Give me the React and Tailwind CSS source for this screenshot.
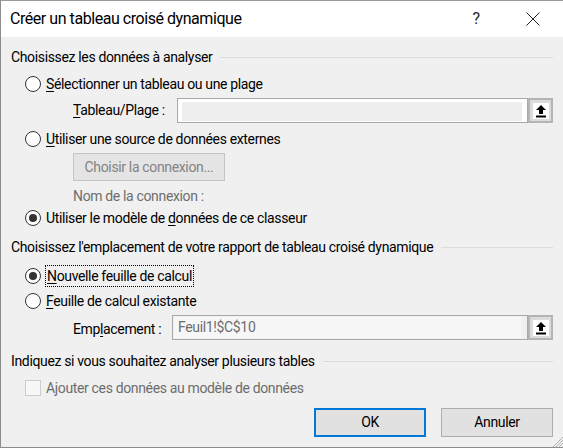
import React from "react";

const font = { fontFamily: 'Roboto, "Noto Sans", sans-serif' };

const Radio = ({ checked }) => (
  <span className="w-4 h-4 rounded-full border border-[#333] bg-white flex items-center justify-center shrink-0">
    {checked && <span className="w-2 h-2 rounded-full bg-[#333]" />}
  </span>
);

const U = ({ children }) => <span className="underline underline-offset-2">{children}</span>;

const PickButton = () => (
  <div className="w-[25px] h-[25px] border-2 border-[#b4b4b4] bg-[#dcdcdc] flex items-center justify-center shrink-0">
    <div className="w-[16px] h-[16px] bg-white flex items-center justify-center">
      <svg width="12" height="14" viewBox="0 0 12 14">
        <path d="M6 1 L11 6 L8 6 L8 10 L4 10 L4 6 L1 6 Z" fill="#000" />
        <rect x="1" y="11.5" width="10" height="2" fill="#000" />
      </svg>
    </div>
  </div>
);

const GroupLabel = ({ children, className }) => (
  <div className={"h-[22px] flex items-center gap-2 pr-[10px] " + className}>
    <span className="whitespace-nowrap">{children}</span>
    <div className="flex-1 h-px bg-[#dcdcdc]" />
  </div>
);

export default function App() {
  return (
    <div
      className="w-[563px] h-[448px] bg-[#f0f0f0] text-[14px] tracking-[-0.35px] text-black border-l border-b border-[#8c8c8c] flex flex-col relative overflow-hidden"
      style={font}
    >
      {/* Title bar */}
      <div className="h-[37px] bg-white flex items-center pl-[9px] shrink-0 border-t border-[#9a9a9a]">
        <span className="text-[16px] tracking-[-0.45px] flex-1">Créer un tableau croisé dynamique</span>
        <span className="w-[20px] text-center text-[16px] mr-[40px] text-[#222]">?</span>
        <svg width="14" height="14" viewBox="0 0 14 14" className="mr-[23px]">
          <path d="M0.5 0.5 L13.5 13.5 M13.5 0.5 L0.5 13.5" stroke="#222" strokeWidth="1" />
        </svg>
      </div>

      <div className="pl-[10px] flex flex-col">
        <GroupLabel className="mt-[9px]">Choisissez les données à analyser</GroupLabel>

        <div className="h-[22px] mt-[5px] pl-[14px] flex items-center gap-[5px]">
          <Radio />
          <span><U>S</U>électionner un tableau ou une plage</span>
        </div>

        <div className="h-[25px] mt-[3px] flex items-center">
          <span className="w-[166px] pl-[62px]"><U>T</U>ableau/Plage :</span>
          <div className="w-[351px] h-[25px] border border-[#a8a8a8] bg-white pt-[3px] pb-[1px] pl-[4px] pr-[5px]">
            <div className="w-full h-full bg-[#eeeeee]" />
          </div>
          <PickButton />
        </div>

        <div className="h-[22px] mt-[5px] pl-[14px] flex items-center gap-[5px]">
          <Radio />
          <span><U>U</U>tiliser une source de données externes</span>
        </div>

        <div className="h-[28px] mt-[3px] pl-[62px] flex">
          <div className="w-[152px] h-[28px] border border-[#c4c4c4] bg-[#e4e4e4] text-[#838383] flex items-center justify-center">
            Choisir la connexion...
          </div>
        </div>

        <div className="h-[21px] mt-[5px] pl-[62px] flex items-center text-[#6d6d6d]">
          Nom de la connexion :
        </div>

        <div className="h-[22px] pl-[14px] flex items-center gap-[5px]">
          <Radio checked />
          <span>Utiliser le modèle de <U>d</U>onnées de ce classeur</span>
        </div>

        <GroupLabel className="mt-[7px]">
          Choisissez l'emplacement de votre rapport de tableau croisé dynamique
        </GroupLabel>

        <div className="h-[22px] mt-[7px] pl-[14px] flex items-center gap-[4px]">
          <Radio checked />
          <span className="border border-dotted border-black px-[1px] leading-[20px]">
            <U>N</U>ouvelle feuille de calcul
          </span>
        </div>

        <div className="h-[22px] mt-[3px] pl-[14px] flex items-center gap-[5px]">
          <Radio />
          <span><U>F</U>euille de calcul existante</span>
        </div>

        <div className="h-[25px] mt-[3px] flex items-center">
          <span className="w-[161px] pl-[62px] pt-[3px]">Emp<U>l</U>acement :</span>
          <div className="w-[356px] h-[25px] border border-[#a8a8a8] bg-[#f0f0f0] pt-px pb-px pl-px pr-[6px]">
            <div className="w-full h-full bg-[#f7f7f7] text-[#6d6d6d] pl-[4px] flex items-center">
              Feuil1!$C$10
            </div>
          </div>
          <PickButton />
        </div>

        <GroupLabel className="mt-[10px]">
          Indiquez si vous souhaitez analyser plusieurs tables
        </GroupLabel>

        <div className="h-[22px] mt-[5px] pl-[14px] flex items-center gap-[5px] text-[#6d6d6d]">
          <span className="w-4 h-4 border border-[#cccccc] bg-[#f7f7f7] shrink-0" />
          <span>Ajouter ces données au modèle de données</span>
        </div>

        <div className="mt-[9px] pr-[10px] flex justify-end gap-[15px]">
          <button className="w-[112px] h-[29px] border-2 border-[#0078d7] bg-[#e1e1e1]">OK</button>
          <button className="w-[112px] h-[29px] border border-[#adadad] bg-[#e1e1e1]">Annuler</button>
        </div>
      </div>

      {/* resize grip */}
      <svg width="12" height="12" viewBox="0 0 12 12" className="absolute right-0 bottom-0">
        <path d="M12 2 L2 12 M12 5 L5 12 M12 8 L8 12" stroke="#b0b0b0" strokeWidth="1" />
      </svg>
    </div>
  );
}
